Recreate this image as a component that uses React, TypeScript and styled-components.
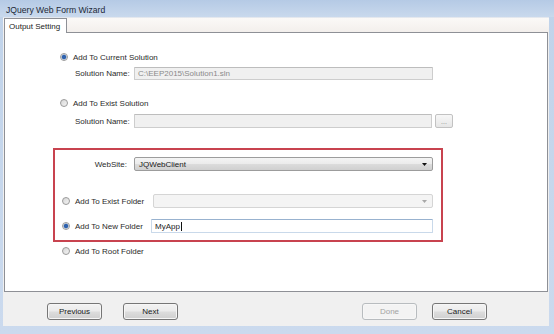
import styled, { createGlobalStyle } from "styled-components";

const GlobalStyle = createGlobalStyle`
  html, body {
    margin: 0;
    padding: 0;
  }
  body {
    font-family: "Liberation Sans", Arial, sans-serif;
    background: #c4d6ec;
  }
`;

const Window = styled.div`
  width: 554px;
  height: 334px;
  display: flex;
  flex-direction: column;
  background: linear-gradient(#c0d3ea, #cbdaee);
  overflow: hidden;
`;

const TitleBar = styled.div`
  height: 17px;
  flex: none;
  display: flex;
  align-items: center;
  padding: 2px 0 0 6px;
  box-sizing: border-box;
  background: linear-gradient(#b5cae5, #c9d9ed);
  font-size: 8.6px;
  color: #1c2837;
`;

const Body = styled.div`
  flex: 1;
  margin: 0 5px 8px 3px;
  background: #f0f0f0;
  display: flex;
  flex-direction: column;
`;

const TabStrip = styled.div`
  height: 15px;
  flex: none;
  display: flex;
  align-items: flex-end;
  padding-left: 1px;
  background: linear-gradient(#fbf9f7, #f3efec);
  border-top: 1px solid #e4e8ee;
  box-sizing: border-box;
`;

const Tab = styled.div`
  width: 63px;
  height: 15px;
  box-sizing: border-box;
  border: 1px solid #8e9096;
  border-bottom: none;
  background: #fff;
  margin-bottom: -1px;
  position: relative;
  z-index: 1;
  font-size: 8px;
  color: #222;
  padding: 3px 0 0 4px;
`;

const Panel = styled.div`
  height: 260px;
  flex: none;
  margin: 0 1px;
  box-sizing: border-box;
  border: 1px solid #8e9096;
  background: #fff;
  padding-top: 17px;
  display: flex;
  flex-direction: column;
  font-size: 8px;
  color: #2a2a2a;
`;

const Row = styled.div<{ $top: number; $left: number; $h?: number }>`
  display: flex;
  align-items: center;
  height: ${(p) => p.$h ?? 14}px;
  margin-top: ${(p) => p.$top}px;
  margin-left: ${(p) => p.$left}px;
  flex: none;
`;

const Radio = styled.span<{ $checked?: boolean }>`
  width: 8px;
  height: 8px;
  box-sizing: border-box;
  border-radius: 50%;
  border: 1px solid #9a9a9a;
  background: ${(p) =>
    p.$checked
      ? "radial-gradient(circle, #2f62ad 0 1.6px, #6d93c8 2.2px, #e8e8e8 2.8px)"
      : "linear-gradient(135deg, #d6d6d6, #f4f4f4)"};
  flex: none;
`;

const RadioLabel = styled.span<{ $w?: number }>`
  margin-left: 5px;
  width: ${(p) => (p.$w ? `${p.$w}px` : "auto")};
  flex: none;
  white-space: nowrap;
`;

const FieldLabel = styled.span<{ $w: number; $right?: boolean }>`
  width: ${(p) => p.$w}px;
  text-align: ${(p) => (p.$right ? "right" : "left")};
  margin-right: ${(p) => (p.$right ? 7 : 0)}px;
  flex: none;
  white-space: nowrap;
`;

const Field = styled.div<{ $w: number; $h?: number; $disabled?: boolean; $focused?: boolean }>`
  width: ${(p) => p.$w}px;
  height: ${(p) => p.$h ?? 14}px;
  box-sizing: border-box;
  display: flex;
  align-items: center;
  padding-left: 3px;
  flex: none;
  background: ${(p) => (p.$disabled ? "#f0f0f0" : "#fff")};
  color: ${(p) => (p.$disabled ? "#8a8a8a" : "#1a1a1a")};
  border: 1px solid ${(p) => (p.$focused ? "#c9d9ea" : "#cdcdcd")};
  border-top-color: ${(p) => (p.$focused ? "#98b2cf" : "#bdbdbd")};
  border-radius: 1px;
`;

const Caret = styled.span`
  width: 1px;
  height: 9px;
  background: #111;
  margin-left: 1px;
`;

const Combo = styled.div<{ $w: number; $disabled?: boolean }>`
  width: ${(p) => p.$w}px;
  height: 14px;
  box-sizing: border-box;
  display: flex;
  align-items: center;
  justify-content: space-between;
  padding: 0 5px 0 4px;
  flex: none;
  border-radius: 2px;
  border: 1px solid ${(p) => (p.$disabled ? "#d5d5d5" : "#9c9c9c")};
  background: ${(p) =>
    p.$disabled ? "#f4f4f4" : "linear-gradient(#f4f4f4 0%, #ebebeb 50%, #dcdcdc 51%, #d0d0d0 100%)"};
  color: #1a1a1a;
`;

const Browse = styled.div`
  width: 18px;
  height: 14px;
  box-sizing: border-box;
  margin-left: 3px;
  border: 1px solid #c2c2c2;
  border-radius: 2px;
  background: linear-gradient(#f7f7f7, #e6e6e6);
  color: #888;
  font-size: 7px;
  display: flex;
  align-items: flex-end;
  justify-content: center;
  padding-bottom: 2px;
  flex: none;
`;

const Highlight = styled.div`
  width: 390px;
  height: 94px;
  box-sizing: border-box;
  margin: 20px 0 0 48px;
  border: 2px solid #c8434f;
  padding-top: 7px;
  display: flex;
  flex-direction: column;
  flex: none;
`;

const Footer = styled.div`
  flex: 1;
  display: flex;
  justify-content: space-between;
  align-items: flex-start;
  padding: 11px 62px 0 44px;
`;

const ButtonGroup = styled.div<{ $gap: number }>`
  display: flex;
  gap: ${(p) => p.$gap}px;
`;

const Button = styled.div<{ $disabled?: boolean }>`
  width: 55px;
  height: 17px;
  box-sizing: border-box;
  border-radius: 3px;
  display: flex;
  align-items: center;
  justify-content: center;
  font-size: 8px;
  border: 1px solid ${(p) => (p.$disabled ? "#b8bcbf" : "#767676")};
  background: ${(p) =>
    p.$disabled
      ? "#f3f3f3"
      : "linear-gradient(#f3f3f3 0%, #ebebeb 48%, #dddddd 52%, #cfcfcf 100%)"};
  color: ${(p) => (p.$disabled ? "#a3a3a3" : "#1a1a1a")};
  box-shadow: inset 0 0 0 1px ${(p) => (p.$disabled ? "#f7f7f7" : "#f6f6f6")};
`;

function Arrow({ disabled }: { disabled?: boolean }) {
  return (
    <svg width="5" height="3" viewBox="0 0 5 3">
      <path d="M0 0 H5 L2.5 3 Z" fill={disabled ? "#a8a8a8" : "#111"} />
    </svg>
  );
}

export default function App() {
  return (
    <>
      <GlobalStyle />
      <Window>
        <TitleBar>JQuery Web Form Wizard</TitleBar>
        <Body>
          <TabStrip>
            <Tab>Output Setting</Tab>
          </TabStrip>
          <Panel>
            <Row $top={0} $left={55}>
              <Radio $checked />
              <RadioLabel>Add To Current Solution</RadioLabel>
            </Row>
            <Row $top={3} $left={70} $h={13}>
              <FieldLabel $w={59}>Solution Name:</FieldLabel>
              <Field $w={299} $h={13} $disabled>
                C:\EEP2015\Solution1.sln
              </Field>
            </Row>
            <Row $top={16} $left={55}>
              <Radio />
              <RadioLabel>Add To Exist Solution</RadioLabel>
            </Row>
            <Row $top={4} $left={70}>
              <FieldLabel $w={59}>Solution Name:</FieldLabel>
              <Field $w={298} $disabled />
              <Browse>...</Browse>
            </Row>
            <Highlight>
              <Row $top={0} $left={0}>
                <FieldLabel $w={72} $right>
                  WebSite:
                </FieldLabel>
                <Combo $w={299}>
                  <span>JQWebClient</span>
                  <Arrow />
                </Combo>
              </Row>
              <Row $top={23} $left={7}>
                <Radio />
                <RadioLabel $w={78}>Add To Exist Folder</RadioLabel>
                <Combo $w={280} $disabled>
                  <span />
                  <Arrow disabled />
                </Combo>
              </Row>
              <Row $top={11} $left={7}>
                <Radio $checked />
                <RadioLabel $w={76}>Add To New Folder</RadioLabel>
                <Field $w={282} $focused>
                  MyApp
                  <Caret />
                </Field>
              </Row>
            </Highlight>
            <Row $top={2} $left={57}>
              <Radio />
              <RadioLabel>Add To Root Folder</RadioLabel>
            </Row>
          </Panel>
          <Footer>
            <ButtonGroup $gap={21}>
              <Button>Previous</Button>
              <Button>Next</Button>
            </ButtonGroup>
            <ButtonGroup $gap={15}>
              <Button $disabled>Done</Button>
              <Button>Cancel</Button>
            </ButtonGroup>
          </Footer>
        </Body>
      </Window>
    </>
  );
}
